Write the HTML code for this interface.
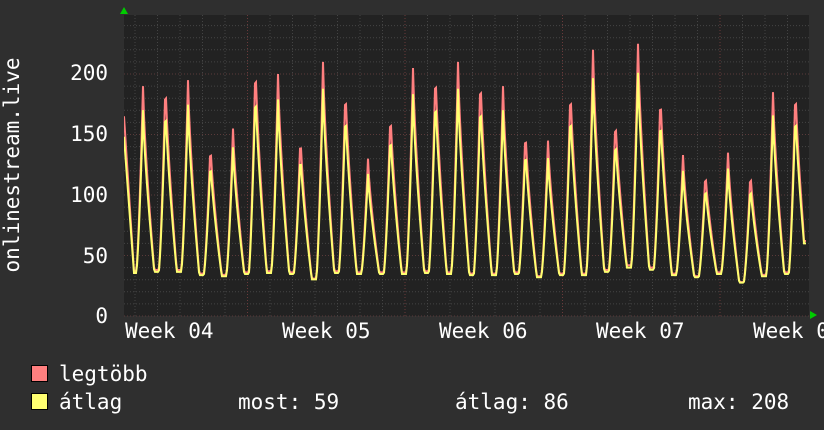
<!DOCTYPE html>
<html><head><meta charset="utf-8"><style>
html,body{margin:0;padding:0;background:#2f2f2f;width:824px;height:430px;overflow:hidden}
svg{display:block}
text{font-family:"DejaVu Sans Mono","Liberation Mono",monospace;fill:#fff;font-size:21px}
</style></head><body>
<svg id="s" width="824" height="430" xmlns="http://www.w3.org/2000/svg">
<defs><clipPath id="c"><rect x="124" y="15" width="685" height="301"/></clipPath></defs>
<rect x="124" y="15" width="685" height="301" fill="#222"/>
<g id="grid"></g>
<g clip-path="url(#c)">
<polyline id="mx" fill="none" stroke="#ff7f7f" stroke-width="2"/>
<polyline id="av" fill="none" stroke="#ffff70" stroke-width="2"/>
</g>
<polygon points="120,14 128,14 124,7" fill="#0c0"/>
<polygon points="810,311 810,319 817,315" fill="#0c0"/>
<text x="108" y="323" text-anchor="end">0</text>
<text x="108" y="263" text-anchor="end">50</text>
<text x="108" y="202" text-anchor="end">100</text>
<text x="108" y="141" text-anchor="end">150</text>
<text x="108" y="80" text-anchor="end">200</text>
<text transform="translate(19,165) rotate(-90)" text-anchor="middle">onlinestream.live</text>
<text x="125" y="338">Week 04</text>
<text x="282" y="338">Week 05</text>
<text x="439" y="338">Week 06</text>
<text x="596" y="338">Week 07</text>
<text x="753" y="338">Week 08</text>
<rect x="31.5" y="365.5" width="16" height="16" fill="#ff7f7f" stroke="#000"/>
<rect x="31.5" y="393.5" width="16" height="16" fill="#ffff70" stroke="#000"/>
<text x="59" y="381">legtöbb</text>
<text x="59" y="409">átlag</text>
<text x="238" y="409">most: 59</text>
<text x="455" y="409">átlag: 86</text>
<text x="688" y="409">max: 208</text>
</svg>
<script>
var g=document.getElementById('grid'),h='';
for(var v=0;v<=250;v+=10){var y=316-v*1.21;if(y<15)break;
 h+='<line x1="124" x2="809" y1="'+y+'" y2="'+y+'" stroke="'+(v%50==0?'#5a3a3a':'#444')+'" stroke-dasharray="1,2"/>';}
for(var x=135;x<809;x+=22.5){var maj=Math.abs(((x-247)/157.5)-Math.round((x-247)/157.5))<0.01;
 h+='<line y1="15" y2="316" x1="'+x+'" x2="'+x+'" stroke="'+(maj?'#6a3a3a':'#444')+'" stroke-dasharray="1,2"/>';}
g.innerHTML=h;
var peaks=[190,195,195,143,155,210,200,150,210,190,130,170,205,205,210,200,190,155,145,190,220,165,225,185,133,120,135,120,185,190];
var troughs=[37,38,38,35,34,36,37,36,31,37,36,36,36,37,36,35,35,36,33,35,35,38,42,40,35,33,36,28,34,36];
function val(x){
 if(x<134)return 165-(x-124)*12.8;
 var d=(x-134)/22.5,i=Math.floor(d),t=d-i;i=Math.min(i,peaks.length-1);
 var p=peaks[i],tr=troughs[i],tn=troughs[Math.min(i+1,troughs.length-1)];
 if(t<0.1)return tr;
 if(t<0.4)return tr+(p-tr)*Math.pow((t-0.1)/0.3,1.4);
 if(t<0.9)return p-(p-tn)*Math.pow((t-0.4)/0.5,0.75);
 return tn;}
var mx=[],av=[];
for(var x=124;x<=806;x++){
 var v=Math.max(28,val(x)),a=v*0.88+3;
 if(x>=804){a=60;v=62;}
 mx.push(x+','+(316-v*1.21).toFixed(1));av.push(x+','+(316-a*1.21).toFixed(1));}
document.getElementById('mx').setAttribute('points',mx.join(' '));
document.getElementById('av').setAttribute('points',av.join(' '));
</script>
</body></html>
